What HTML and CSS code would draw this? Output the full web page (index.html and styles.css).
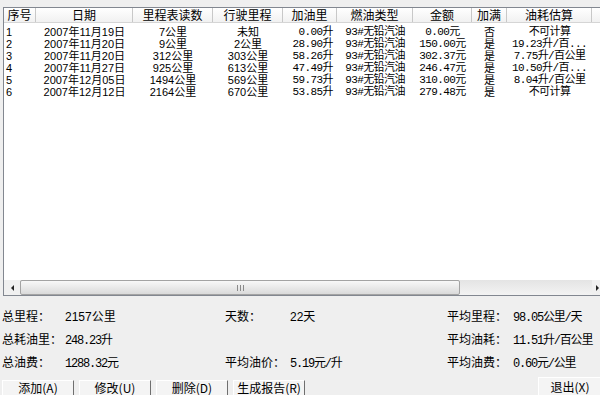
FILE: index.html
```html
<!DOCTYPE html>
<html lang="zh-CN">
  <head>
    <meta charset="UTF-8" />
    <title>油耗记录</title>
    <link rel="stylesheet" href="styles.css">
  </head>
  <body>
    <div class="list">
      <div class="list-head">
        <span>序号</span>
        <span>日期</span>
        <span>里程表读数</span>
        <span>行驶里程</span>
        <span>加油里</span>
        <span>燃油类型</span>
        <span>金额</span>
        <span>加满</span>
        <span>油耗估算</span>
        <span></span>
      </div>

      <div class="list-body">
        <div class="list-row">
          <span class="no">1</span><span>2007年11月19日</span><span>7公里</span><span>未知</span>
          <span class="sim right">0.00升</span><span class="sim">93#无铅汽油</span><span class="sim">0.00元</span>
          <span>否</span><span class="sim">不可计算</span><span></span>
        </div>
        <div class="list-row">
          <span class="no">2</span><span>2007年11月20日</span><span>9公里</span><span>2公里</span>
          <span class="sim right">28.90升</span><span class="sim">93#无铅汽油</span><span class="sim">150.00元</span>
          <span>是</span><span class="sim">19.23升/百...</span><span></span>
        </div>
        <div class="list-row">
          <span class="no">3</span><span>2007年11月20日</span><span>312公里</span><span>303公里</span>
          <span class="sim right">58.26升</span><span class="sim">93#无铅汽油</span><span class="sim">302.37元</span>
          <span>是</span><span class="sim">7.75升/百公里</span><span></span>
        </div>
        <div class="list-row">
          <span class="no">4</span><span>2007年11月27日</span><span>925公里</span><span>613公里</span>
          <span class="sim right">47.49升</span><span class="sim">93#无铅汽油</span><span class="sim">246.47元</span>
          <span>是</span><span class="sim">10.50升/百...</span><span></span>
        </div>
        <div class="list-row">
          <span class="no">5</span><span>2007年12月05日</span><span>1494公里</span><span>569公里</span>
          <span class="sim right">59.73升</span><span class="sim">93#无铅汽油</span><span class="sim">310.00元</span>
          <span>是</span><span class="sim">8.04升/百公里</span><span></span>
        </div>
        <div class="list-row">
          <span class="no">6</span><span>2007年12月12日</span><span>2164公里</span><span>670公里</span>
          <span class="sim right">53.85升</span><span class="sim">93#无铅汽油</span><span class="sim">279.48元</span>
          <span>是</span><span class="sim">不可计算</span><span></span>
        </div>
      </div>

      <div class="hscroll">
        <div class="arrow arrow-left"><i></i></div>
        <div class="thumb"><b></b><b></b><b></b></div>
        <div class="track"></div>
        <div class="arrow arrow-right"><i></i></div>
      </div>
    </div>

    <div class="stats">
      <span>总里程：</span><span>2157公里</span>
      <span>天数：</span><span>22天</span>
      <span>平均里程：</span><span class="sim">98.05公里/天</span>

      <span>总耗油里：</span><span class="sim">248.23升</span>
      <span></span><span></span>
      <span>平均油耗：</span><span class="sim">11.51升/百公里</span>

      <span>总油费：</span><span class="sim">1288.32元</span>
      <span>平均油价：</span><span class="sim">5.19元/升</span>
      <span>平均油费：</span><span class="sim">0.60元/公里</span>
    </div>

    <div class="buttons">
      <button class="btn">添加(A)</button>
      <button class="btn">修改(U)</button>
      <button class="btn">删除(D)</button>
      <button class="btn">生成报告(R)</button>
      <button class="btn btn-exit">退出(X)</button>
    </div>
  </body>
</html>
```

FILE: styles.css
```css
* {
  box-sizing: border-box;
}

body {
  margin: 0;
  width: 600px;
  height: 395px;
  overflow: hidden;
  background-color: #efefef;
  font-family: 'Liberation Sans', 'Noto Sans CJK SC', sans-serif;
  font-size: 11px;
  color: #000;
}

.sim {
  font-family: 'Liberation Mono', 'Noto Sans CJK SC', monospace;
  letter-spacing: -0.6px;
}

/* list view */

.list {
  margin: 7px 0 0 3px;
  width: 605px;
  height: 289px;
  background-color: #fff;
  border: 1px solid #828790;
  border-right: none;
  display: flex;
  flex-direction: column;
}

.list-head,
.list-row {
  display: grid;
  grid-template-columns: 32px 97px 80px 70px 54px 76px 59px 35px 85px 1fr;
}

.list-head {
  height: 15px;
  background: linear-gradient(#fff, #f1f1f1);
  border-bottom: 1px solid #d5d5d5;
  font-family: 'Noto Sans CJK SC', sans-serif;
  font-size: 12px;
  line-height: 14px;
}

.list-head span {
  text-align: center;
  border-right: 1px solid #c8c8c8;
}

.list-body {
  flex: 1;
  padding-top: 3px;
}

.list-row {
  height: 12px;
  line-height: 12px;
}

.list-row span {
  text-align: center;
  white-space: nowrap;
}

.list-row .no {
  text-align: left;
  padding-left: 2px;
}

.list-row .right {
  text-align: right;
  padding-right: 4px;
}

/* horizontal scrollbar */

.hscroll {
  height: 15px;
  display: flex;
  background: linear-gradient(#e4e4e4, #f3f3f3);
}

.arrow {
  width: 16px;
  display: flex;
  align-items: center;
  background-color: #f0f0f0;
}

.arrow-left {
  justify-content: center;
}

.arrow-right {
  padding-left: 4px;
}

.arrow i {
  width: 0;
  height: 0;
  border-top: 3px solid transparent;
  border-bottom: 3px solid transparent;
}

.arrow-left i {
  border-right: 3px solid #222;
}

.arrow-right i {
  border-left: 3px solid #222;
}

.thumb {
  width: 440px;
  border: 1px solid #a3a3a3;
  border-radius: 2px;
  background: linear-gradient(#f8f8f8, #dadada);
  display: flex;
  align-items: center;
  justify-content: center;
  gap: 2px;
}

.thumb b {
  width: 1px;
  height: 6px;
  background-color: #8a8a8a;
}

.track {
  flex: 1;
}

/* totals */

.stats {
  display: grid;
  grid-template-columns: 63px 160px 65px 157px 66px 1fr;
  grid-auto-rows: 23px;
  align-items: center;
  padding: 8px 0 0 2px;
  font-size: 12px;
}

.stats .sim {
  letter-spacing: -1.2px;
}

/* bottom buttons */

.buttons {
  display: flex;
  align-items: flex-start;
  gap: 5px;
  margin-top: 4px;
  padding-left: 2px;
}

.btn {
  width: 72px;
  height: 22px;
  margin: 3px 0 0;
  padding: 0;
  background-color: #f4f4f4;
  border: 1px solid;
  border-color: #fff #6f6f6f #6f6f6f #fff;
  font-family: 'Noto Sans CJK SC', sans-serif;
  font-size: 12px;
  line-height: 13px;
  display: flex;
  justify-content: center;
  color: #000;
}

.btn-exit {
  width: 64px;
  margin: 0 -2px 0 auto;
  padding-top: 2px;
}
```
